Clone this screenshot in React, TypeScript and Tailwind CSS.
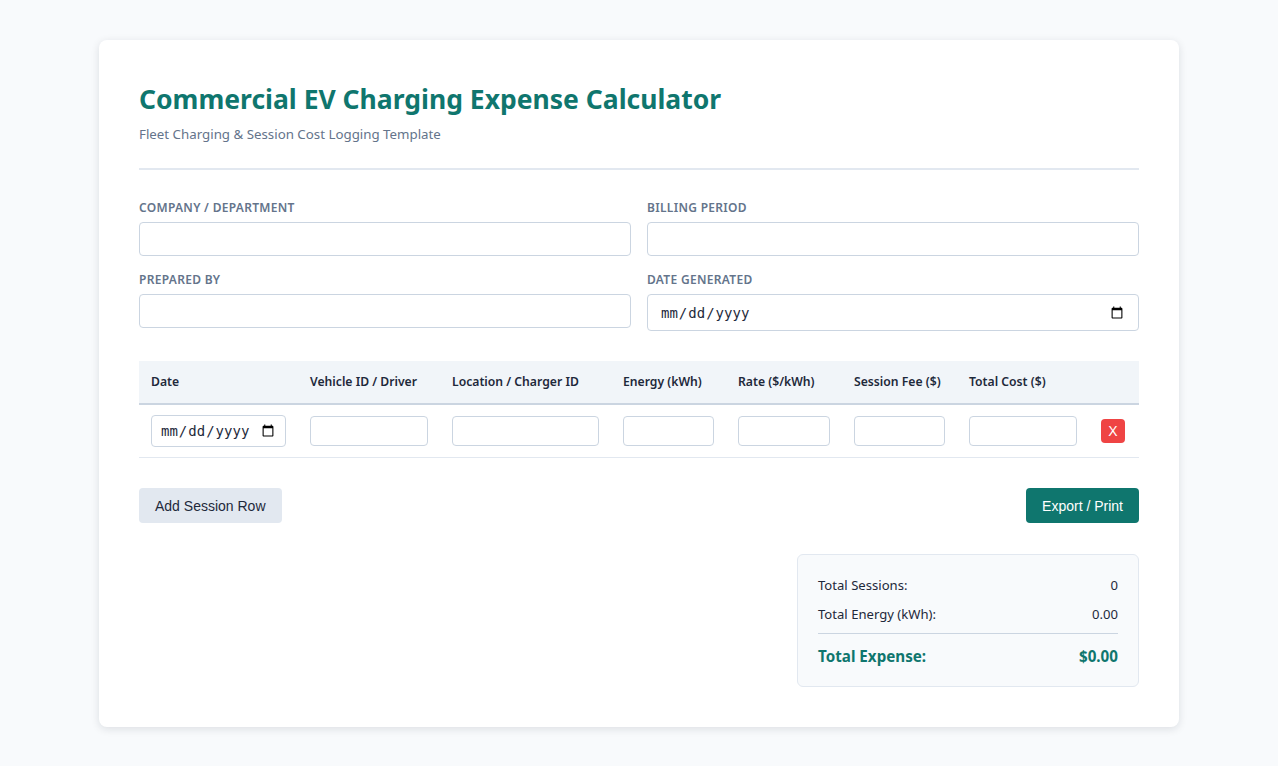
import React, { useState } from "react";

type Row = {
  id: number;
  date: string;
  vehicle: string;
  location: string;
  energy: string;
  rate: string;
  fee: string;
};

const columns = [
  { label: "Date", width: "w-[159px]" },
  { label: "Vehicle ID / Driver", width: "w-[142px]" },
  { label: "Location / Charger ID", width: "w-[171px]" },
  { label: "Energy (kWh)", width: "w-[115px]" },
  { label: "Rate ($/kWh)", width: "w-[116px]" },
  { label: "Session Fee ($)", width: "w-[115px]" },
  { label: "Total Cost ($)", width: "w-[132px]" },
  { label: "", width: "w-[50px]" },
];

const fieldClass =
  "w-full rounded-[4px] border border-[#cbd5e1] bg-white px-3 py-[7px] text-sm text-[#1e293b] outline-none";
const cellInput =
  "w-full h-[30px] rounded-[4px] border border-[#cbd5e1] bg-white px-2 text-sm text-[#1e293b] outline-none";
const monoFont = "font-['DejaVu_Sans_Mono',monospace]";

const Field = ({ label, type = "text" }: { label: string; type?: string }) => (
  <div className="flex flex-col gap-[6px]">
    <label className="text-xs font-semibold uppercase tracking-[0.3px] text-[#64748b]">
      {label}
    </label>
    <input
      type={type}
      className={type === "date" ? `${fieldClass} h-[37px] ${monoFont}` : `${fieldClass} h-[34px]`}
    />
  </div>
);

const App = () => {
  const [rows, setRows] = useState<Row[]>([
    { id: 1, date: "", vehicle: "", location: "", energy: "", rate: "", fee: "" },
  ]);

  const addRow = () => {
    setRows([
      ...rows,
      { id: Date.now(), date: "", vehicle: "", location: "", energy: "", rate: "", fee: "" },
    ]);
  };

  const removeRow = (id: number) => setRows(rows.filter((r) => r.id !== id));

  const update = (id: number, key: keyof Row, value: string) => {
    setRows(rows.map((r) => (r.id === id ? { ...r, [key]: value } : r)));
  };

  const rowTotal = (r: Row) => {
    const e = parseFloat(r.energy) || 0;
    const rate = parseFloat(r.rate) || 0;
    const fee = parseFloat(r.fee) || 0;
    return e * rate + fee;
  };

  // only rows with some energy count as sessions
  const sessions = rows.filter((r) => parseFloat(r.energy) > 0).length;
  const totalEnergy = rows.reduce((s, r) => s + (parseFloat(r.energy) || 0), 0);
  const totalExpense = rows.reduce((s, r) => s + rowTotal(r), 0);

  return (
    <div className="min-h-screen bg-[#f8fafc] py-10 font-['Noto_Sans',sans-serif]">
      <div className="mx-auto w-[1080px] rounded-lg bg-white p-10 shadow-[0_2px_8px_rgba(15,23,42,0.12)]">
        <div className="mb-[30px] border-b-2 border-[#e2e8f0] pb-6">
          <h1 className="mb-[7px] text-[26.5px] font-bold leading-[38px] text-[#0f766e]">
            Commercial EV Charging Expense Calculator
          </h1>
          <p className="text-[13.3px] leading-[19px] text-[#64748b]">
            Fleet Charging &amp; Session Cost Logging Template
          </p>
        </div>

        <div className="grid grid-cols-2 gap-x-4 gap-y-4">
          <Field label="Company / Department" />
          <Field label="Billing Period" />
          <Field label="Prepared By" />
          <Field label="Date Generated" type="date" />
        </div>

        <table className="mt-[30px] w-full table-fixed border-collapse">
          <thead>
            <tr className="border-b-2 border-[#cbd5e1] bg-[#f1f5f9]">
              {columns.map((c, i) => (
                <th
                  key={i}
                  className={`${c.width} whitespace-nowrap px-3 py-3 text-left text-[12.2px] font-semibold leading-[18px] text-[#1e293b]`}
                >
                  {c.label}
                </th>
              ))}
            </tr>
          </thead>
          <tbody>
            {rows.map((r) => (
              <tr key={r.id} className="border-b border-[#e2e8f0]">
                <td className="px-3 py-[10px]">
                  <input
                    type="date"
                    value={r.date}
                    onChange={(e) => update(r.id, "date", e.target.value)}
                    className={`${cellInput} h-[32px] ${monoFont}`}
                  />
                </td>
                <td className="px-3 py-[10px]">
                  <input
                    value={r.vehicle}
                    onChange={(e) => update(r.id, "vehicle", e.target.value)}
                    className={cellInput}
                  />
                </td>
                <td className="px-3 py-[10px]">
                  <input
                    value={r.location}
                    onChange={(e) => update(r.id, "location", e.target.value)}
                    className={cellInput}
                  />
                </td>
                <td className="px-3 py-[10px]">
                  <input
                    value={r.energy}
                    onChange={(e) => update(r.id, "energy", e.target.value)}
                    className={cellInput}
                  />
                </td>
                <td className="px-3 py-[10px]">
                  <input
                    value={r.rate}
                    onChange={(e) => update(r.id, "rate", e.target.value)}
                    className={cellInput}
                  />
                </td>
                <td className="px-3 py-[10px]">
                  <input
                    value={r.fee}
                    onChange={(e) => update(r.id, "fee", e.target.value)}
                    className={cellInput}
                  />
                </td>
                <td className="px-3 py-[10px]">
                  <input
                    readOnly
                    value={rowTotal(r) > 0 ? rowTotal(r).toFixed(2) : ""}
                    className={cellInput}
                  />
                </td>
                <td className="px-3 py-[10px]">
                  <button
                    onClick={() => removeRow(r.id)}
                    className="flex h-6 w-6 items-center justify-center rounded-[4px] bg-[#ef4444] font-['Liberation_Sans',Arial,sans-serif] text-sm text-white"
                  >
                    X
                  </button>
                </td>
              </tr>
            ))}
          </tbody>
        </table>

        <div className="mt-[30px] flex items-center justify-between font-['Liberation_Sans',Arial,sans-serif]">
          <button
            onClick={addRow}
            className="h-[35px] rounded-[4px] bg-[#e2e8f0] px-4 text-sm text-[#1e293b]"
          >
            Add Session Row
          </button>
          <button
            onClick={() => window.print()}
            className="h-[35px] rounded-[4px] bg-[#0f766e] px-4 text-sm text-white"
          >
            Export / Print
          </button>
        </div>

        <div className="mt-[31px] flex justify-end">
          <div className="w-[342px] rounded-md border border-[#e2e8f0] bg-[#f8fafc] px-5 pb-[19px] pt-4 text-[13.1px] text-[#1e293b]">
            <div className="flex justify-between py-[5px] leading-[19px]">
              <span>Total Sessions:</span>
              <span>{sessions}</span>
            </div>
            <div className="flex justify-between py-[5px] leading-[19px]">
              <span>Total Energy (kWh):</span>
              <span>{totalEnergy.toFixed(2)}</span>
            </div>
            <div className="mt-[4px] flex justify-between border-t border-[#cbd5e1] pt-[11px] text-[15.2px] font-bold leading-[22px] text-[#0f766e]">
              <span>Total Expense:</span>
              <span>${totalExpense.toFixed(2)}</span>
            </div>
          </div>
        </div>
      </div>
    </div>
  );
};

export default App;
